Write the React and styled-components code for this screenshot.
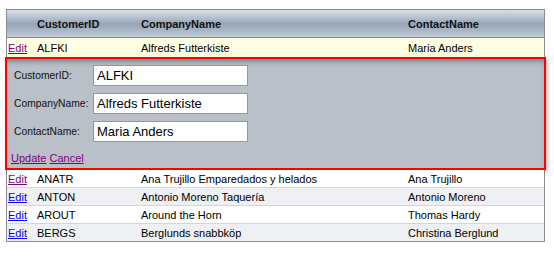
import React from 'react';
import styled, { createGlobalStyle } from 'styled-components';

const GlobalStyle = createGlobalStyle`
    body {
        margin: 0;
        background: #ffffff;
        font-family: "Liberation Sans", Arial, sans-serif;
        font-size: 11px;
        color: #000;
    }
`;

const Page = styled.div`
    padding: 9px 0 0 6px;
`;

const Grid = styled.div`
    width: 537px;
    border: 1px solid #8c8c8c;
    display: grid;
    grid-template-columns: 29px 104px 267px 1fr;
`;

const HeadCell = styled.div`
    height: 27px;
    display: flex;
    align-items: center;
    padding-left: 1px;
    font-weight: bold;
    font-size: 11px;
    color: #111;
    border-bottom: 1px solid #7d8a9b;
    background: linear-gradient(to bottom, #d6dde6 0%, #b9c4d1 25%, #97a6b9 50%, #a8b5c5 75%, #c4cdd8 100%);
`;

const Cell = styled.div`
    height: ${p => p.$tall ? '19px' : '17px'};
    display: flex;
    align-items: center;
    padding-left: 1px;
    white-space: nowrap;
    overflow: hidden;
    background: ${p => p.$bg};
    border-bottom: ${p => p.$sep ? '1px solid #d3d5d9' : 'none'};
`;

const EditLink = styled.a`
    color: ${p => p.$visited ? '#800080' : '#0000ff'};
    text-decoration: underline;
    cursor: pointer;
`;

const EditRow = styled.div`
    grid-column: 1 / -1;
    margin: 0 -2px;
    border: 2px solid #ff0000;
    background: #b9c0c8;
    box-shadow: inset 0 5px 5px -2px rgba(60, 66, 76, 0.45), 2px 2px 4px rgba(0, 0, 0, 0.25);
    height: 113px;
    padding: 6px 0 0 7px;
    box-sizing: border-box;
`;

const Form = styled.div`
    display: grid;
    grid-template-columns: 79px 155px;
    row-gap: 7px;
    align-items: center;
`;

const Label = styled.label`
    font-size: 10.3px;
    color: #111;
`;

const Input = styled.input`
    box-sizing: border-box;
    width: 155px;
    height: 21px;
    margin: 0;
    border: 1px solid #7f9db9;
    padding: 0 3px;
    font-family: "Liberation Sans", Arial, sans-serif;
    font-size: 13px;
    color: #000;
    background: #fff;
    outline: none;
`;

const Actions = styled.div`
    margin-top: 10px;
    margin-left: -3px;
    display: flex;
    gap: 3px;
    font-size: 11px;
`;

const rows = [
    ['ANATR', 'Ana Trujillo Emparedados y helados', 'Ana Trujillo', true],
    ['ANTON', 'Antonio Moreno Taquería', 'Antonio Moreno', false],
    ['AROUT', 'Around the Horn', 'Thomas Hardy', false],
    ['BERGS', 'Berglunds snabbköp', 'Christina Berglund', false],
];

const App = () => {
    return (
        <>
            <GlobalStyle />
            <Page>
                <Grid>
                    <HeadCell></HeadCell>
                    <HeadCell>CustomerID</HeadCell>
                    <HeadCell>CompanyName</HeadCell>
                    <HeadCell>ContactName</HeadCell>

                    <Cell $bg="#fefee2" $tall><EditLink $visited>Edit</EditLink></Cell>
                    <Cell $bg="#fefee2" $tall>ALFKI</Cell>
                    <Cell $bg="#fefee2" $tall>Alfreds Futterkiste</Cell>
                    <Cell $bg="#fefee2" $tall>Maria Anders</Cell>

                    <EditRow>
                        <Form>
                            <Label>CustomerID:</Label>
                            <Input defaultValue="ALFKI" />
                            <Label>CompanyName:</Label>
                            <Input defaultValue="Alfreds Futterkiste" />
                            <Label>ContactName:</Label>
                            <Input defaultValue="Maria Anders" />
                        </Form>
                        <Actions>
                            <EditLink $visited>Update</EditLink>
                            <EditLink $visited>Cancel</EditLink>
                        </Actions>
                    </EditRow>

                    {rows.map(([id, company, contact, visited], i) => {
                        const bg = i % 2 ? '#eef0f3' : '#ffffff';
                        const sep = i < rows.length - 1;
                        return (
                            <React.Fragment key={id}>
                                <Cell $bg={bg} $sep={sep}><EditLink $visited={visited}>Edit</EditLink></Cell>
                                <Cell $bg={bg} $sep={sep}>{id}</Cell>
                                <Cell $bg={bg} $sep={sep}>{company}</Cell>
                                <Cell $bg={bg} $sep={sep}>{contact}</Cell>
                            </React.Fragment>
                        );
                    })}
                </Grid>
            </Page>
        </>
    );
}

export default App;
